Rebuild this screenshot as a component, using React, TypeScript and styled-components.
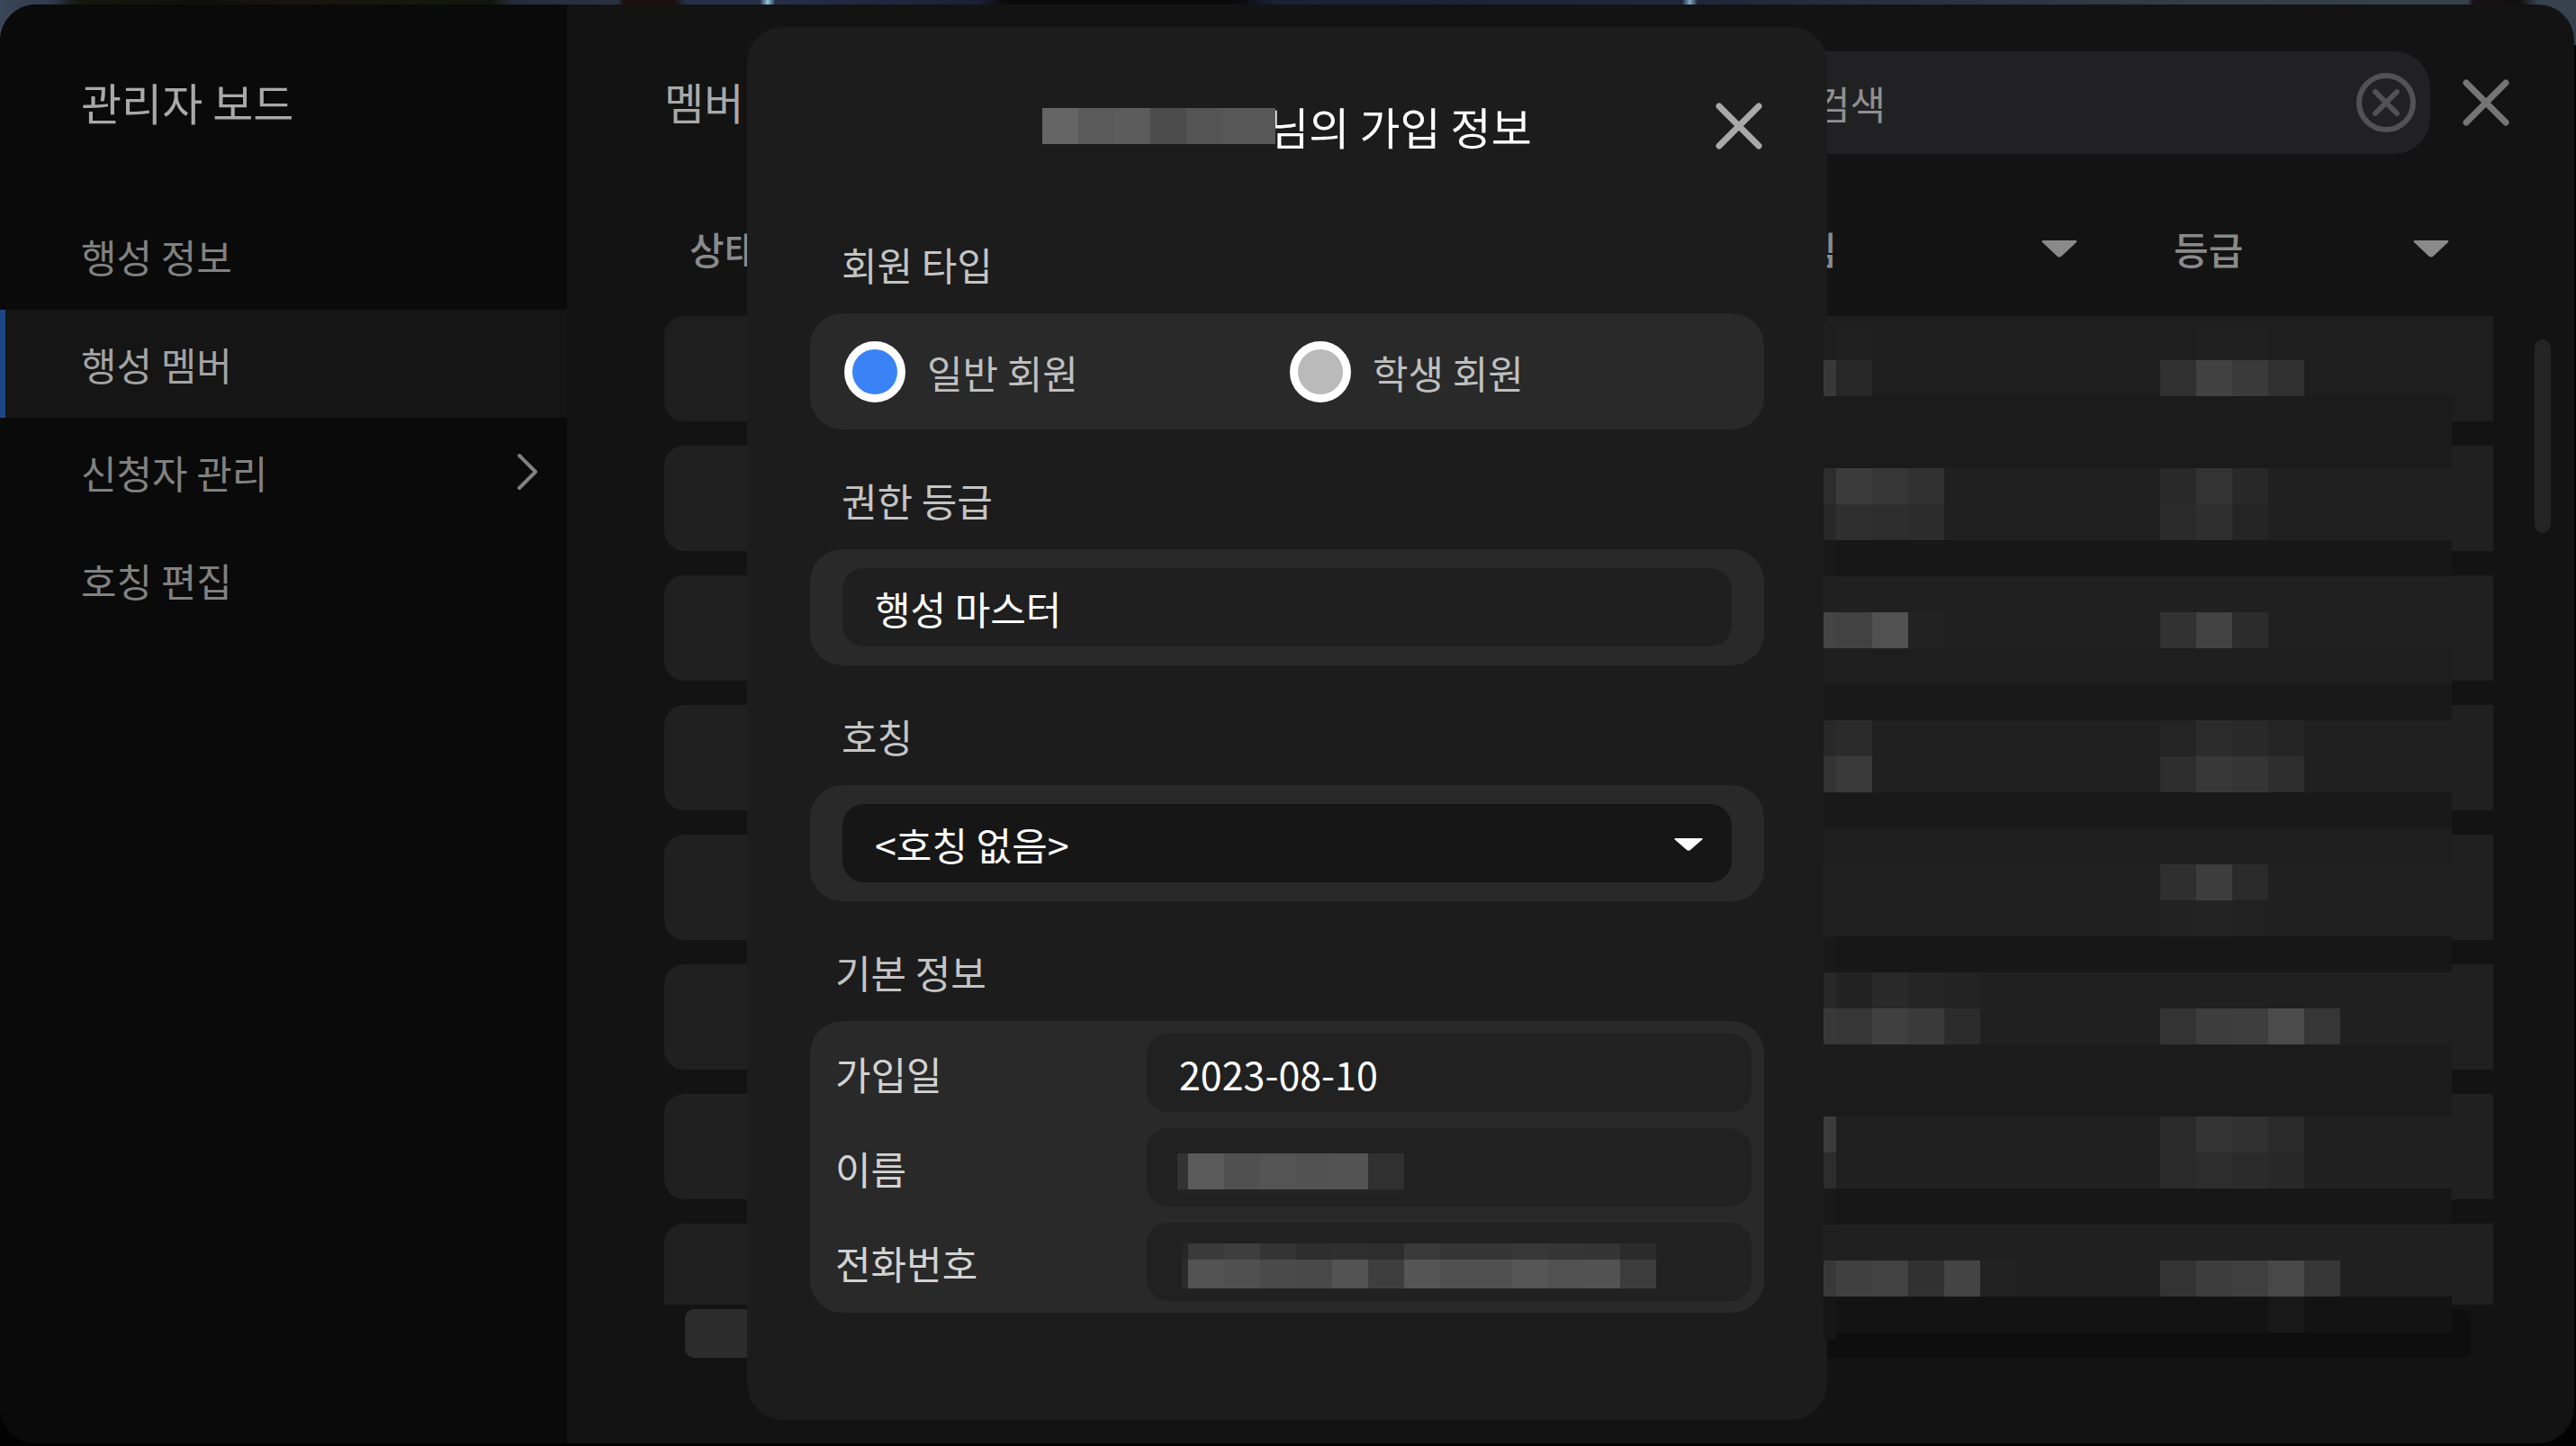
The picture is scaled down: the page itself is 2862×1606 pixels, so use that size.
import React from "react";
import styled, { createGlobalStyle } from "styled-components";

const GlobalStyle = createGlobalStyle`
  *, *::before, *::after { box-sizing: border-box; }
  body {
    margin: 0;
    background: #020202;
    color: #c4c4c4;
    font-family: "Noto Sans CJK KR", "Noto Sans", sans-serif;
    font-size: 43px;
    line-height: 60px;
  }
  h1, h2, p, ul { margin: 0; padding: 0; font-weight: 400; }
  button, input, select { font: inherit; color: inherit; }
`;

/* ---------- shell ---------- */

const Stage = styled.div`
  display: flex;
  min-height: 100vh;
  padding: 5px 2px 3px 0;
  background:
    linear-gradient(90deg,
      #3a4759 0%, #303a4c 2%, #14170e 3%, #0f100b 8%, #1a1411 11%, #15180d 16%, #12150e 19%,
      #252c3c 20%, #2a3142 24%, #1c0f12 24.2%, #1c0f12 26.2%, #262f48 26.6%, #262f48 29.5%,
      #8fc9dc 29.8%, #262f48 30.1%, #1b2036 38%, #0b0a0c 39%, #0b0a0c 48%, #1b2036 49.5%,
      #20273a 65.3%, #7fa9c9 65.6%, #20273a 65.9%, #343c49 85%, #37414e 95.8%, #1a1216 96%,
      #120e10 97.8%, #37414e 98.5%, #37414e 100%)
    top / 100% 50px no-repeat, #020202;
`;

const Board = styled.div`
  flex: 1;
  display: grid;
  grid-template-columns: 630px 1fr;
  overflow: hidden;
  border-radius: 40px;
  background: #131313;
`;

const Sidebar = styled.aside`
  background: #0a0a0a;
`;

const SidebarTitle = styled.h1`
  height: 219px;
  padding: 72px 90px 0;
  font-size: 49px;
  line-height: 72px;
  color: #a9a9a9;
`;

const NavList = styled.ul`
  list-style: none;
`;

const NavLink = styled.a<{ $active?: boolean }>`
  display: flex;
  align-items: center;
  justify-content: space-between;
  height: 120px;
  padding: 0 32px 0 84px;
  border-left: 6px solid ${(p) => (p.$active ? "#1d4687" : "transparent")};
  background: ${(p) => (p.$active ? "#151515" : "transparent")};
  color: ${(p) => (p.$active ? "#a3a3a3" : "#818181")};
  text-decoration: none;
`;

/* ---------- member list ---------- */

const Main = styled.main`
  position: relative;
  display: flex;
  flex-direction: column;
  min-width: 0;
  padding: 52px 72px 95px 108px;
`;

const TopBar = styled.header`
  display: flex;
  align-items: center;
  height: 114px;
`;

const PageTitle = styled.h2`
  flex: 1;
  padding-bottom: 4px;
  font-size: 48px;
  line-height: 72px;
  color: #a9a9a9;
`;

const SearchBox = styled.label`
  display: flex;
  align-items: center;
  width: 740px;
  height: 114px;
  margin-right: 36px;
  padding: 0 16px 0 54px;
  border-radius: 40px;
  background: #212123;
`;

const SearchInput = styled.input`
  flex: 1;
  min-width: 0;
  border: 0;
  outline: 0;
  background: transparent;
  color: #909090;
  &::placeholder { color: #909090; opacity: 1; }
`;

const IconButton = styled.button<{ $color: string }>`
  display: flex;
  padding: 0;
  border: 0;
  background: transparent;
  color: ${(p) => p.$color};
  cursor: pointer;
`;

const TableViewport = styled.div`
  flex: 1 1 0;
  min-height: 0;
  margin: 36px 18px 0 0;
  overflow: hidden;
`;

const MemberTable = styled.table`
  width: 100%;
  table-layout: fixed;
  border-collapse: separate;
  border-spacing: 0 27px;
`;

const HeadCell = styled.th<{ $width?: number; $inset: number }>`
  width: ${(p) => (p.$width ? `${p.$width}px` : "auto")};
  height: 90px;
  padding: 0 49px 6px ${(p) => p.$inset}px;
  text-align: left;
  font-size: 42px;
  font-weight: 500;
  color: #8a8a8a;
`;

const HeadContent = styled.div`
  display: flex;
  align-items: center;
  justify-content: space-between;
`;

const Cell = styled.td<{ $dim?: boolean }>`
  height: 117px;
  padding: 0;
  background: ${(p) => (p.$dim ? "#1e1e1e" : "#202020")};
  &:first-child { border-radius: 22px 0 0 22px; }
`;

const HScroll = styled.div`
  display: flex;
  height: 54px;
  margin: 5px 42px 0 23px;
  border-radius: 10px;
  background: #0e0e0e;
`;

const HScrollThumb = styled.div`
  width: 50%;
  border-radius: 10px;
  background: #2c2c2c;
`;

const VScrollThumb = styled.div`
  position: absolute;
  top: 372px;
  right: 26px;
  width: 18px;
  height: 215px;
  border-radius: 9px;
  background: #242424;
`;

/* ---------- mosaic over private data ---------- */

type Block = [column: number, shade: string];
interface BandData { base: string; height?: number; blocks?: Block[]; }

const Band = styled.span<{ $base: string; $columns: string; $height: number }>`
  display: grid;
  grid-template-columns: ${(p) => p.$columns};
  height: ${(p) => p.$height}px;
  background: ${(p) => p.$base};
`;

const Pixel = styled.span<{ $column: number; $shade: string }>`
  grid-column: ${(p) => p.$column + 1};
  grid-row: 1;
  background: #${(p) => p.$shade.repeat(3)};
`;

function Mosaic({ bands, columns }: { bands: BandData[]; columns: string }) {
  return (
    <>
      {bands.map((band, i) => (
        <Band key={i} $base={band.base} $columns={columns} $height={band.height ?? 40}>
          {band.blocks?.map(([column, shade]) => (
            <Pixel key={column} $column={column} $shade={shade} />
          ))}
        </Band>
      ))}
    </>
  );
}

const run = (start: number, shades: string): Block[] =>
  shades.split(" ").map((shade, i) => [start + i, shade]);

const LIST_BANDS: BandData[] = [
  { base: "#1e1e1e", blocks: [...run(1, "20"), ...run(11, "20 20")] },
  { base: "#1e1e1e", blocks: [...run(0, "38 27"), ...run(10, "30 41 3a 30")] },
  { base: "#1b1b1b", height: 80 },
  { base: "#202020", blocks: [...run(0, "2d 3b 36 31"), ...run(10, "29 33 28")] },
  { base: "#202020", blocks: [...run(0, "28 2f 2d 2c"), ...run(10, "2a 2f 24")] },
  { base: "#171717", blocks: run(0, "19") },
  { base: "#202020" },
  { base: "#202020", blocks: [...run(0, "45 42 51 22"), ...run(10, "32 42 2c")] },
  { base: "#1e1e1e" },
  { base: "#191919" },
  { base: "#202020", blocks: [...run(0, "28 2b"), ...run(10, "24 2c 29 25")] },
  { base: "#202020", blocks: [...run(0, "33 3a"), ...run(10, "2e 38 35 2d")] },
  { base: "#191919" },
  { base: "#1e1e1e" },
  { base: "#202020", blocks: run(10, "2f 3d 2a") },
  { base: "#202020", blocks: run(10, "22 23 21") },
  { base: "#171717", blocks: run(0, "19") },
  { base: "#202020", blocks: run(0, "28 22 29 25 23") },
  { base: "#202020", blocks: [...run(0, "38 36 40 3a 2c"), ...run(10, "33 3d 3e 4b 36")] },
  { base: "#1c1c1c" },
  { base: "#1b1b1b" },
  { base: "#202020", blocks: [...run(0, "3c"), ...run(10, "2a 34 31 2a")] },
  { base: "#202020", blocks: [...run(0, "2d"), ...run(10, "2a 2d 2b 28")] },
  { base: "#171717", blocks: run(0, "19") },
  { base: "#202020" },
  { base: "#202020", blocks: [...run(0, "38 40 42 31 44 22"), ...run(10, "33 3d 3f 48 36")] },
  { base: "#131313", blocks: [...run(0, "16"), ...run(13, "18")] },
  { base: "transparent", height: 8, blocks: run(0, "16") },
];

const ListMosaic = styled.div`
  position: absolute;
  z-index: 2;
  top: 355px;
  right: 136px;
  width: 698px;
`;

/* ---------- dialog ---------- */

const Overlay = styled.div`
  position: fixed;
  z-index: 1;
  inset: 0;
  display: flex;
  justify-content: center;
  align-items: flex-start;
  padding: 30px 2px 28px 0;
`;

const Dialog = styled.section`
  display: flex;
  flex-direction: column;
  gap: 39px;
  width: 1200px;
  padding: 0 70px 119px;
  border-radius: 40px;
  background: #1c1c1c;
`;

const DialogHeader = styled.header`
  display: grid;
  grid-template-columns: 1fr auto 1fr;
  align-items: center;
  height: 220px;
  margin-bottom: -35px;
`;

const DialogTitle = styled.h2`
  display: flex;
  grid-column: 2;
  align-items: center;
  font-size: 49px;
  line-height: 72px;
  color: #ffffff;
`;

const TitleMosaic = styled.span`
  position: relative;
  display: block;
  width: 259px;
  margin-right: -8px;
`;

const CloseSlot = styled.div`
  justify-self: end;
  padding-right: 2px;
`;

const GroupLabel = styled.label<{ $inset?: number }>`
  display: block;
  height: 94px;
  padding: 9px ${(p) => p.$inset ?? 35}px 0;
  color: #c4c4c4;
`;

const Panel = styled.div`
  height: 129px;
  padding: 21px 36px;
  border-radius: 36px;
  background: #292929;
`;

const RadioPanel = styled(Panel)`
  display: grid;
  grid-template-columns: 1fr 1fr;
  align-items: center;
  padding: 0 32px 0 38px;
`;

const RadioLabel = styled.label`
  display: flex;
  align-items: center;
  gap: 24px;
  color: #bfbfbf;
`;

const Radio = styled.input`
  appearance: none;
  width: 68px;
  height: 68px;
  margin: 0;
  border: 9px solid #ffffff;
  border-radius: 50%;
  background: #bababa;
  &:checked { background: #3a83f7; }
`;

const TextField = styled.input`
  display: block;
  width: 100%;
  height: 87px;
  padding: 0 36px;
  border: 0;
  border-radius: 24px;
  outline: 0;
  background: #1f1f1f;
  color: #ffffff;
`;

const SelectWrap = styled.div`
  position: relative;
`;

const Select = styled.select`
  display: block;
  appearance: none;
  width: 100%;
  height: 87px;
  padding: 0 36px;
  border: 0;
  border-radius: 24px;
  background: #161616;
  color: #ffffff;
`;

const SelectArrow = styled.span`
  position: absolute;
  top: 38px;
  right: 32px;
  display: flex;
  color: #ffffff;
  pointer-events: none;
`;

const InfoPanel = styled.div`
  display: grid;
  gap: 18px;
  padding: 14px 14px 13px 28px;
  border-radius: 36px;
  background: #292929;
`;

const InfoRow = styled.div`
  display: grid;
  grid-template-columns: 346px 1fr;
  align-items: center;
  height: 87px;
  color: #d2d2d2;
`;

const InfoField = styled(TextField)`
  background: #212121;
`;

const MaskedField = styled.div<{ $top: number; $left: number }>`
  height: 87px;
  padding: ${(p) => p.$top}px 0 0 ${(p) => p.$left}px;
  border-radius: 24px;
  background: #212121;
`;

const NameMask = styled.div`
  width: 252px;
`;

const PhoneMask = styled.div`
  width: 527px;
`;

/* ---------- icons ---------- */

const Cross = ({ size = 52 }: { size?: number }) => (
  <svg width={size} height={size} viewBox="0 0 52 52" fill="none" stroke="currentColor" strokeWidth="7" strokeLinecap="round">
    <path d="M4 4L48 48M48 4L4 48" />
  </svg>
);

const CircleCross = () => (
  <svg width="66" height="66" viewBox="0 0 66 66" fill="none" stroke="currentColor" strokeWidth="6" strokeLinecap="round">
    <circle cx="33" cy="33" r="30" />
    <path d="M21 21L45 45M45 21L21 45" />
  </svg>
);

const Triangle = ({ width, height }: { width: number; height: number }) => (
  <svg width={width} height={height} viewBox="0 0 40 19" fill="currentColor" preserveAspectRatio="none">
    <path d="M1.5 0H38.5Q40 0.6 39 2L22.5 17.6Q20 19.4 17.5 17.6L1 2Q0 0.6 1.5 0Z" />
  </svg>
);

const Chevron = () => (
  <svg width="24" height="42" viewBox="0 0 24 42" fill="none" stroke="currentColor" strokeWidth="4" strokeLinecap="round" strokeLinejoin="round">
    <path d="M3 3L21 21L3 39" />
  </svg>
);

/* ---------- page ---------- */

const NAV = [
  { label: "행성 정보" },
  { label: "행성 멤버", active: true },
  { label: "신청자 관리", nested: true },
  { label: "호칭 편집" },
];

const ROWS = Array.from({ length: 8 }, (_, i) => i);

export default function App() {
  const [memberType, setMemberType] = React.useState("general");

  return (
    <>
      <GlobalStyle />
      <Stage>
        <Board>
          <Sidebar>
            <SidebarTitle>관리자 보드</SidebarTitle>
            <nav>
              <NavList>
                {NAV.map((item) => (
                  <li key={item.label}>
                    <NavLink href="#" $active={item.active}>
                      {item.label}
                      {item.nested && <Chevron />}
                    </NavLink>
                  </li>
                ))}
              </NavList>
            </nav>
          </Sidebar>

          <Main>
            <TopBar>
              <PageTitle>멤버</PageTitle>
              <SearchBox>
                <SearchInput type="text" placeholder="검색" aria-label="검색" />
                <IconButton type="button" aria-label="지우기" $color="#525252">
                  <CircleCross />
                </IconButton>
              </SearchBox>
              <IconButton type="button" aria-label="닫기" $color="#757575">
                <Cross />
              </IconButton>
            </TopBar>

            <TableViewport>
              <MemberTable>
                <thead>
                  <tr>
                    <HeadCell $inset={28}>상태</HeadCell>
                    <HeadCell $inset={28} $width={460}>
                      <HeadContent>닉네임<Triangle width={40} height={19} /></HeadContent>
                    </HeadCell>
                    <HeadCell $inset={58} $width={413}>
                      <HeadContent>등급<Triangle width={40} height={19} /></HeadContent>
                    </HeadCell>
                  </tr>
                </thead>
                <tbody>
                  {ROWS.map((row) => (
                    <tr key={row}>
                      <Cell $dim={row === 0} />
                      <Cell $dim={row === 0} />
                      <Cell $dim={row === 0} />
                    </tr>
                  ))}
                </tbody>
              </MemberTable>
            </TableViewport>
            <HScroll>
              <HScrollThumb />
            </HScroll>
            <VScrollThumb />
            <ListMosaic>
              <Mosaic bands={LIST_BANDS} columns="14px repeat(17, 40px) 4px" />
            </ListMosaic>
          </Main>
        </Board>
      </Stage>

      <Overlay>
        <Dialog role="dialog" aria-labelledby="dialog-title">
          <DialogHeader>
            <DialogTitle id="dialog-title">
              <TitleMosaic>
                <Mosaic
                  columns="repeat(6, 40px) 19px"
                  bands={[{ base: "#575757", blocks: run(0, "65 5a 5c 4c 54 57") }]}
                />
              </TitleMosaic>
              님의 가입 정보
            </DialogTitle>
            <CloseSlot>
              <IconButton type="button" aria-label="닫기" $color="#a9a9a9">
                <Cross />
              </IconButton>
            </CloseSlot>
          </DialogHeader>

          <div role="radiogroup" aria-labelledby="type-label">
            <GroupLabel as="div" id="type-label">회원 타입</GroupLabel>
            <RadioPanel>
              <RadioLabel>
                <Radio type="radio" name="type" checked={memberType === "general"} onChange={() => setMemberType("general")} />
                일반 회원
              </RadioLabel>
              <RadioLabel>
                <Radio type="radio" name="type" checked={memberType === "student"} onChange={() => setMemberType("student")} />
                학생 회원
              </RadioLabel>
            </RadioPanel>
          </div>

          <div>
            <GroupLabel htmlFor="grade">권한 등급</GroupLabel>
            <Panel>
              <TextField id="grade" type="text" readOnly value="행성 마스터" />
            </Panel>
          </div>

          <div>
            <GroupLabel htmlFor="honorific">호칭</GroupLabel>
            <Panel>
              <SelectWrap>
                <Select id="honorific">
                  <option>&lt;호칭 없음&gt;</option>
                </Select>
                <SelectArrow>
                  <Triangle width={32} height={14} />
                </SelectArrow>
              </SelectWrap>
            </Panel>
          </div>

          <div>
            <GroupLabel as="div" $inset={28}>기본 정보</GroupLabel>
            <InfoPanel>
              <InfoRow>
                <label htmlFor="joined">가입일</label>
                <InfoField id="joined" type="text" readOnly value="2023-08-10" />
              </InfoRow>
              <InfoRow>
                <span>이름</span>
                <MaskedField $top={28} $left={34}>
                  <NameMask>
                    <Mosaic
                      columns="12px repeat(6, 40px)"
                      bands={[
                        { base: "#333333", blocks: run(1, "5a 50 54 52 53 30") },
                        { base: "#242424", height: 5 },
                      ]}
                    />
                  </NameMask>
                </MaskedField>
              </InfoRow>
              <InfoRow>
                <span>전화번호</span>
                <MaskedField $top={23} $left={39}>
                  <PhoneMask>
                    <Mosaic
                      columns="7px repeat(13, 40px)"
                      bands={[
                        { base: "#262626", height: 18, blocks: run(1, "3a 3e 34 2e 2f 2d 3a 35 35 38 35 34 2b") },
                        { base: "#2b2b2b", height: 32, blocks: run(1, "53 50 4a 48 53 3e 55 50 50 56 51 52 3c") },
                      ]}
                    />
                  </PhoneMask>
                </MaskedField>
              </InfoRow>
            </InfoPanel>
          </div>
        </Dialog>
      </Overlay>
    </>
  );
}
